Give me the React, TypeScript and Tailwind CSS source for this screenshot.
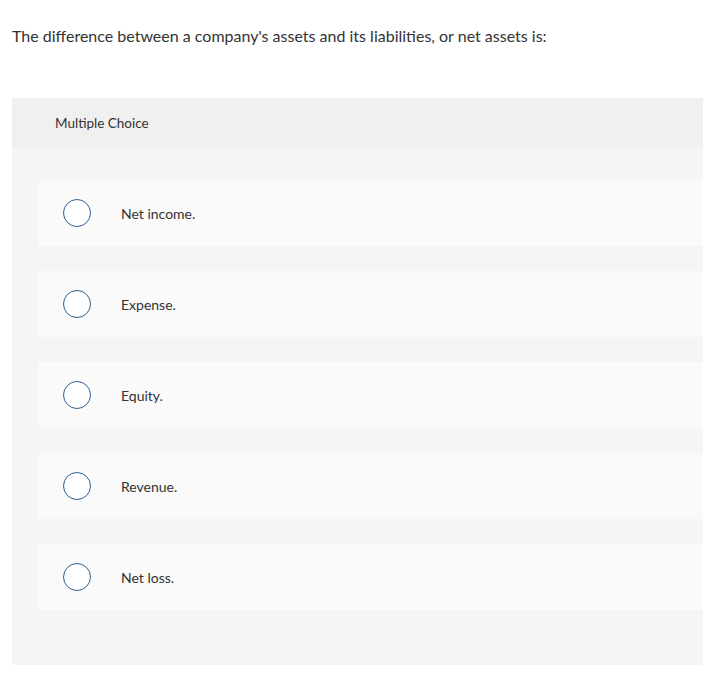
import React from "react";

const options = ["Net income.", "Expense.", "Equity.", "Revenue.", "Net loss."];

export default function App() {
  return (
    <div className="w-[703px] h-[682px] bg-white text-[#333]" style={{ fontFamily: "Lato, 'Open Sans', sans-serif" }}>
      <div className="pt-[26px] pl-[12px] text-[16px] leading-[20px]">
        The difference between a company's assets and its liabilities, or net assets is:
      </div>
      <div className="mt-[52px] ml-[12px] rounded-b-[3px] bg-[#f5f5f5]">
        <div className="h-[50px] bg-[#f0f0f0] flex items-center pl-[43px] text-[13.5px] pt-[1px]">Multiple Choice</div>
        <div className="pt-[32px] pb-[55px] pl-[26px] flex flex-col gap-[25px]">
          {options.map((o) => (
            <div key={o} className="h-[66px] bg-[#fafafa] rounded-l-[3px] flex items-center">
              <div className="ml-[25px] w-[28px] h-[28px] rounded-full border-[1.5px] border-[#2f5f8e] bg-white" />
              <div className="ml-[30px] text-[14px]">{o}</div>
            </div>
          ))}
        </div>
      </div>
    </div>
  );
}
